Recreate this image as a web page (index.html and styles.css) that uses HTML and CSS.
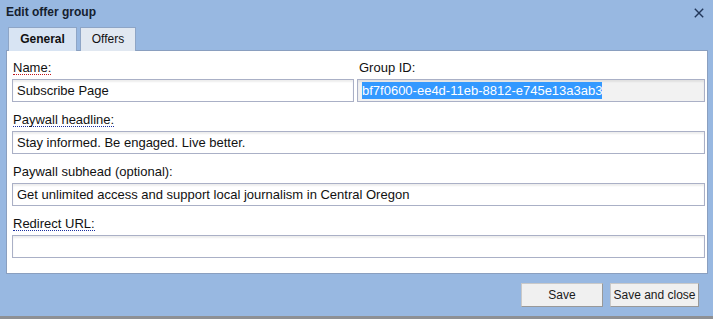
FILE: index.html
```html
<!DOCTYPE html>
<html lang="en">
<head>
    <meta charset="UTF-8">
    <meta name="viewport" content="width=device-width, initial-scale=1.0">
    <title>Edit offer group</title>
    <link rel="stylesheet" href="styles.css">
</head>
<body>

    <div class="dialog">
        <!-- Title bar -->
        <div class="title-bar">
            <span class="title">Edit offer group</span>
            <svg class="close" width="10" height="10" viewBox="0 0 10 10">
                <path d="M0.8 0.8 L9.2 9.2 M9.2 0.8 L0.8 9.2" stroke="#22375a" stroke-width="1.4" fill="none"/>
            </svg>
        </div>

        <!-- Tabs -->
        <div class="tabs">
            <div class="tab active">General</div>
            <div class="tab">Offers</div>
        </div>

        <!-- Form -->
        <div class="panel">
            <div class="row-two">
                <div class="field">
                    <div class="label"><span class="hint required">Name:</span></div>
                    <div class="input">Subscribe Page</div>
                </div>
                <div class="field">
                    <div class="label group-label">Group ID:</div>
                    <div class="input readonly"><span class="selected">bf7f0600-ee4d-11eb-8812-e745e13a3ab3</span></div>
                </div>
            </div>

            <div class="field">
                <div class="label"><span class="hint">Paywall headline:</span></div>
                <div class="input">Stay informed. Be engaged. Live better.</div>
            </div>

            <div class="field">
                <div class="label">Paywall subhead (optional):</div>
                <div class="input">Get unlimited access and support local journalism in Central Oregon</div>
            </div>

            <div class="field">
                <div class="label"><span class="hint">Redirect URL:</span></div>
                <div class="input"></div>
            </div>
        </div>

        <!-- Buttons -->
        <div class="footer">
            <button class="btn save">Save</button>
            <button class="btn save-close">Save and close</button>
        </div>
    </div>
    <div class="bottom-edge"></div>

</body>
</html>
```

FILE: styles.css
```css
body {
    margin: 0;
    padding: 0;
    font-family: 'Liberation Sans', Arial, sans-serif;
    background-color: #98b8e1;
    color: #111;
}

.dialog {
    width: 713px;
    height: 316px;
    background-color: #98b8e1;
    box-sizing: border-box;
}

/* Title bar */
.title-bar {
    height: 26px;
    line-height: 24px;
    padding-left: 6px;
    display: flex;
    justify-content: space-between;
    align-items: flex-start;
}

.title {
    font-size: 12px;
    font-weight: bold;
    color: #15202e;
}

.close {
    margin-top: 8px;
    margin-right: 9px;
}

/* Tabs */
.tabs {
    height: 24px;
    display: flex;
    gap: 3px;
    padding-left: 8px;
    box-sizing: border-box;
    padding-top: 1px;
}

.tab {
    height: 24px;
    box-sizing: border-box;
    border: 1px solid #8ea5c6;
    border-bottom: none;
    font-size: 12px;
    line-height: 22px;
    text-align: center;
    color: #111;
    background-color: #e1e8f1;
    width: 56px;
}

.tab.active {
    width: 69px;
    font-weight: bold;
    background-color: #d8e4f3;
}

/* Panel */
.panel {
    margin: 0 5px 0 6px;
    height: 224px;
    box-sizing: border-box;
    background: white;
    border: 1px solid #8a9fbf;
    padding: 9px 2px 0 5px;
    display: flex;
    flex-direction: column;
    gap: 10px;
}

.row-two {
    display: grid;
    grid-template-columns: 342px 1fr;
    column-gap: 3px;
}

.label {
    height: 16px;
    line-height: 16px;
    font-size: 13px;
    margin-bottom: 3px;
    padding-left: 1px;
}

.group-label {
    padding-left: 2px;
}

.hint {
    display: inline-block;
    line-height: 13px;
    border-bottom: 1px dotted #1a2f9e;
}

.hint.required {
    border-bottom-color: #c0161c;
}

.input {
    height: 23px;
    box-sizing: border-box;
    border: 1px solid #aab0c6;
    background: white;
    box-shadow: inset 0 2px 2px rgba(0, 0, 0, 0.07);
    font-size: 13px;
    line-height: 21px;
    padding: 0 4px;
    white-space: nowrap;
    overflow: hidden;
}

.input.readonly {
    background-color: #f2f2f2;
}

.selected {
    background-color: #3399ff;
    color: white;
    padding: 1px 0;
}

/* Footer */
.footer {
    display: flex;
    justify-content: flex-end;
    gap: 7px;
    padding: 9px 14px 0 0;
}

.btn {
    height: 24px;
    box-sizing: border-box;
    font-family: 'Liberation Sans', Arial, sans-serif;
    font-size: 12px;
    color: #1a1a1a;
    background-color: #f0f0f0;
    border: 1px solid #c9c9c9;
    border-right-color: #999;
    border-bottom-color: #999;
    padding: 0;
    cursor: pointer;
}

.save {
    width: 82px;
}

.save-close {
    width: 89px;
}

.bottom-edge {
    height: 3px;
    background-color: #8e9094;
}
```
